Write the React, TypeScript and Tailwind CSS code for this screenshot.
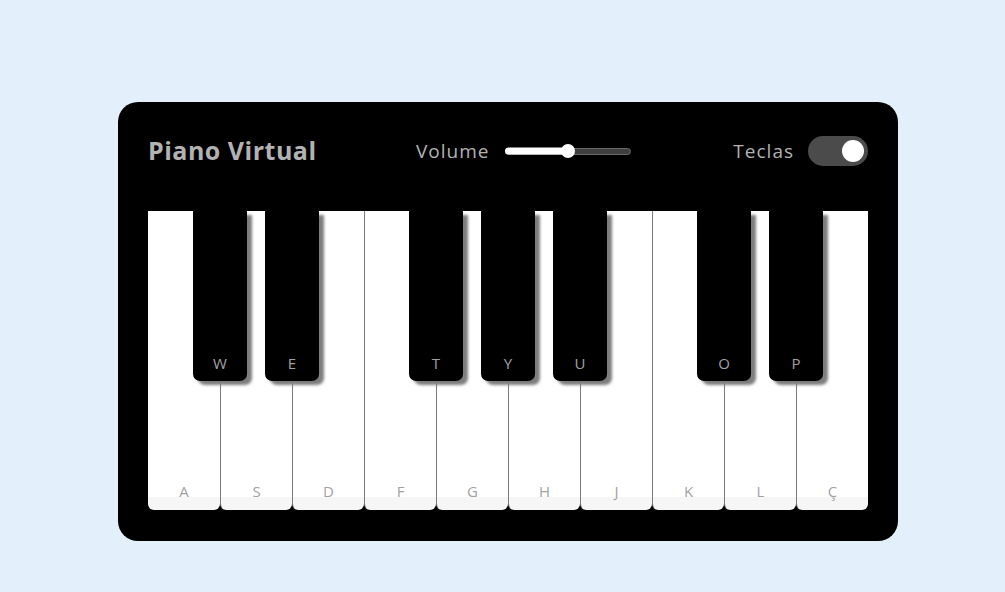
const whiteKeys = ["A", "S", "D", "F", "G", "H", "J", "K", "L", "Ç"];

// black key sits on the border after white key index `at`
const blackKeys = [
  { label: "W", at: 1 },
  { label: "E", at: 2 },
  { label: "T", at: 4 },
  { label: "Y", at: 5 },
  { label: "U", at: 6 },
  { label: "O", at: 8 },
  { label: "P", at: 9 },
];

const font = { fontFamily: '"Open Sans", "Noto Sans", sans-serif' };

function VolumeSlider() {
  return (
    <div className="relative flex h-[14px] w-[126px] items-center">
      <div className="h-[7px] w-full rounded-full border border-[#6a6a6a] bg-[#3f3f3f]" />
      <div className="absolute left-0 top-1/2 h-[7px] w-[64px] -translate-y-1/2 rounded-l-full bg-white" />
      <div className="absolute left-[56px] top-0 h-[14px] w-[14px] rounded-full bg-white" />
    </div>
  );
}

function Toggle() {
  return (
    <div className="flex h-[30px] w-[60px] items-center justify-end rounded-full bg-[#4b4b4b] pr-[4px]">
      <div className="h-[22px] w-[22px] rounded-full bg-white" />
    </div>
  );
}

export default function App() {
  return (
    <div className="min-h-[592px] w-full bg-[#e3f0fc] pl-[118px] pt-[102px]" style={font}>
      <div className="w-[780px] rounded-[20px] bg-black px-[30px] pb-[31px] pt-[34px]">
        <header className="flex h-[30px] items-center">
          <h2 className="w-[268px] text-[25px] font-bold tracking-[0.5px] text-[#b2b2b2]">Piano Virtual</h2>
          <div className="flex items-center gap-[16px]">
            <span className="text-[19px] tracking-[1px] text-[#b2b2b2]">Volume</span>
            <VolumeSlider />
          </div>
          <div className="ml-auto flex items-center gap-[14px]">
            <span className="text-[19px] tracking-[1px] text-[#b2b2b2]">Teclas</span>
            <Toggle />
          </div>
        </header>

        <div className="relative mt-[45px] flex h-[299px] w-[720px]">
          {whiteKeys.map((k, i) => (
            <div
              key={k}
              className={
                "relative flex h-full w-[72px] items-end justify-center rounded-b-[6px] bg-[linear-gradient(#ffffff_95.5%,#f6f6f6_95.5%)] pb-[8px] " +
                (i > 0 ? "border-l border-[#7a7a7a]" : "")
              }
            >
              <span className="text-[15px] text-[#a2a2a2]">{k}</span>
            </div>
          ))}
          {blackKeys.map((b) => (
            <div
              key={b.label}
              className="absolute top-0 z-10 flex h-[170px] w-[54px] items-end justify-center rounded-b-[7px] bg-black pb-[7px] shadow-[5px_4px_3px_#7d7d7d]"
              style={{ left: b.at * 72 - 27 }}
            >
              <span className="text-[15px] text-[#a2a2a2]">{b.label}</span>
            </div>
          ))}
        </div>
      </div>
    </div>
  );
}
